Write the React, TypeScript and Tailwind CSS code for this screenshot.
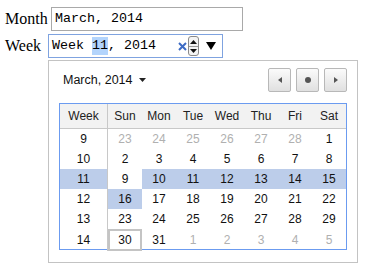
import React from "react";

type Cell = { d: number; other?: boolean; sel?: boolean; today?: boolean };

const ROWS: { wk: number; wkSel?: boolean; days: Cell[] }[] = [
  {
    wk: 9,
    days: [
      { d: 23, other: true },
      { d: 24, other: true },
      { d: 25, other: true },
      { d: 26, other: true },
      { d: 27, other: true },
      { d: 28, other: true },
      { d: 1 },
    ],
  },
  { wk: 10, days: [2, 3, 4, 5, 6, 7, 8].map((d) => ({ d })) },
  {
    wk: 11,
    wkSel: true,
    days: [{ d: 9 }, ...[10, 11, 12, 13, 14, 15].map((d) => ({ d, sel: true }))],
  },
  {
    wk: 12,
    days: [{ d: 16, sel: true }, ...[17, 18, 19, 20, 21, 22].map((d) => ({ d }))],
  },
  { wk: 13, days: [23, 24, 25, 26, 27, 28, 29].map((d) => ({ d })) },
  {
    wk: 14,
    days: [
      { d: 30, today: true },
      { d: 31 },
      { d: 1, other: true },
      { d: 2, other: true },
      { d: 3, other: true },
      { d: 4, other: true },
      { d: 5, other: true },
    ],
  },
];

const DAYS = ["Sun", "Mon", "Tue", "Wed", "Thu", "Fri", "Sat"];

function NavButton({ children }: { children: React.ReactNode }) {
  return (
    <div className="flex h-[24px] w-[23px] items-center justify-center rounded-[2px] border border-[#b8b8b8] bg-gradient-to-b from-[#fbfbfb] to-[#e0e0e0]">
      {children}
    </div>
  );
}

export default function App() {
  return (
    <div className="h-[268px] w-[366px] overflow-hidden bg-white font-['Liberation_Serif',serif] text-[16px] text-black">
      <div className="pl-[5px] pt-[7px]">
        {/* Month */}
        <div className="flex h-[24px] items-center">
          <span className="w-[46px] leading-none">Month</span>
          <div className="flex h-[24px] w-[192px] items-center border border-[#a9a9a9] pl-[3px] font-['Liberation_Mono',monospace] text-[13.33px]">
            March, 2014
          </div>
        </div>

        {/* Week */}
        <div className="mt-[3px] flex h-[24px] items-center">
          <span className="w-[43px] leading-none">Week</span>
          <div className="flex h-[24px] w-[175px] items-center border border-[#7fa3e0] pl-[3px] font-['Liberation_Mono',monospace] text-[13.33px]">
            <span className="whitespace-pre">Week </span>
            <span className="bg-[#b3d4fc] leading-[18px]">11</span>
            <span className="whitespace-pre">, 2014</span>
            <svg className="ml-[22px]" width="9" height="9" viewBox="0 0 9 9">
              <path d="M1 1L8 8M8 1L1 8" stroke="#3d6bc4" strokeWidth="2" />
            </svg>
            <div className="ml-[1px] flex h-[20px] w-[11px] flex-col items-center justify-center rounded-[3px] border border-[#8a8a8a] bg-[#f4f4f4]">
              <svg width="7" height="4" viewBox="0 0 7 4">
                <path d="M0 4L3.5 0L7 4Z" fill="#111" />
              </svg>
              <div className="my-[2px] h-px w-[9px] bg-[#9a9a9a]" />
              <svg width="7" height="4" viewBox="0 0 7 4">
                <path d="M0 0L3.5 4L7 0Z" fill="#111" />
              </svg>
            </div>
            <svg className="ml-[7px]" width="10" height="8" viewBox="0 0 10 8">
              <path d="M0 0L5 8L10 0Z" fill="#000" />
            </svg>
          </div>
        </div>

        {/* Popup */}
        <div className="ml-[43px] mt-[2px] h-[203px] w-[310px] border border-[#c3c3c3] bg-white px-[10px] font-['Liberation_Sans',Arial,sans-serif] text-[12px] text-[#111]">
          <div className="mt-[7px] flex h-[24px] items-center justify-between">
            <div className="flex items-center pl-[4px] text-[12.5px]">
              March, 2014
              <svg className="ml-[7px]" width="7" height="4" viewBox="0 0 7 4">
                <path d="M0 0L3.5 4L7 0Z" fill="#222" />
              </svg>
            </div>
            <div className="flex gap-[5px]">
              <NavButton>
                <svg width="4" height="6" viewBox="0 0 4 6">
                  <path d="M4 0L0 3L4 6Z" fill="#555" />
                </svg>
              </NavButton>
              <NavButton>
                <div className="h-[6px] w-[6px] rounded-full bg-[#555]" />
              </NavButton>
              <NavButton>
                <svg width="4" height="6" viewBox="0 0 4 6">
                  <path d="M0 0L4 3L0 6Z" fill="#555" />
                </svg>
              </NavButton>
            </div>
          </div>

          <div className="mt-[11px] w-[288px] border border-[#6b9bf0]">
            <div className="grid h-[25px] grid-cols-[48px_repeat(7,34px)] border-b border-[#c8c8c8] bg-[#f2f2f2] text-[#222]">
              <div className="flex items-center justify-center border-r border-[#c8c8c8]">Week</div>
              {DAYS.map((d) => (
                <div key={d} className="flex items-center justify-center">
                  {d}
                </div>
              ))}
            </div>
            {ROWS.map((r) => (
              <div key={r.wk} className="grid h-[20px] grid-cols-[48px_repeat(7,34px)]">
                <div
                  className={
                    "flex items-center justify-center border-r border-[#c8c8c8] " +
                    (r.wkSel ? "bg-[#bccdea]" : "")
                  }
                >
                  {r.wk}
                </div>
                {r.days.map((c, i) => (
                  <div
                    key={i}
                    className={
                      "flex items-center justify-center " +
                      (c.sel ? "bg-[#bccdea] " : "") +
                      (c.other ? "text-[#b0b0b0] " : "text-[#111] ") +
                      (c.today ? "border-2 border-[#c4c4c4]" : "")
                    }
                  >
                    {c.d}
                  </div>
                ))}
              </div>
            ))}
          </div>
        </div>
      </div>
    </div>
  );
}
